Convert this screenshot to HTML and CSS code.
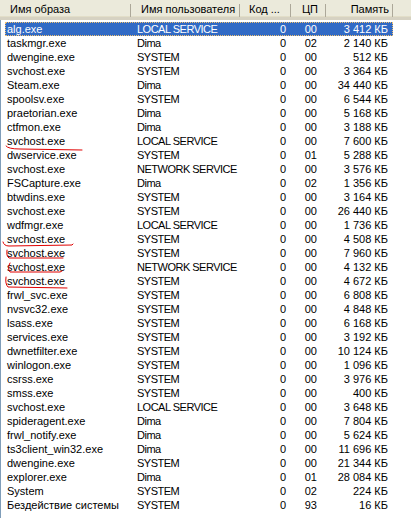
FILE: index.html
```html
<!DOCTYPE html>
<html lang="ru">
<head>
<meta charset="utf-8">
<title>Процессы</title>
<link rel="stylesheet" href="styles.css">
</head>
<body>
<div class="view">
  <div class="header">
    <div class="hcell c-name">Имя образа</div>
    <div class="hcell c-user">Имя пользователя</div>
    <div class="hcell c-pid">Код ...</div>
    <div class="hcell c-cpu">ЦП</div>
    <div class="hcell c-mem">Память</div>
    <div class="hcell c-fill"></div>
  </div>
  <div class="list">
    <div class="row sel"><span>alg.exe</span><span class="u">LOCAL SERVICE</span><span class="r">0</span><span class="r cpu">00</span><span class="r">3 412 КБ</span></div>
    <div class="row"><span>taskmgr.exe</span><span class="u">Dima</span><span class="r">0</span><span class="r cpu">02</span><span class="r">2 140 КБ</span></div>
    <div class="row"><span>dwengine.exe</span><span class="u">SYSTEM</span><span class="r">0</span><span class="r cpu">00</span><span class="r">512 КБ</span></div>
    <div class="row"><span>svchost.exe</span><span class="u">SYSTEM</span><span class="r">0</span><span class="r cpu">00</span><span class="r">3 364 КБ</span></div>
    <div class="row"><span>Steam.exe</span><span class="u">Dima</span><span class="r">0</span><span class="r cpu">00</span><span class="r">34 440 КБ</span></div>
    <div class="row"><span>spoolsv.exe</span><span class="u">SYSTEM</span><span class="r">0</span><span class="r cpu">00</span><span class="r">6 544 КБ</span></div>
    <div class="row"><span>praetorian.exe</span><span class="u">Dima</span><span class="r">0</span><span class="r cpu">00</span><span class="r">5 168 КБ</span></div>
    <div class="row"><span>ctfmon.exe</span><span class="u">Dima</span><span class="r">0</span><span class="r cpu">00</span><span class="r">3 188 КБ</span></div>
    <div class="row"><span>svchost.exe</span><span class="u">LOCAL SERVICE</span><span class="r">0</span><span class="r cpu">00</span><span class="r">7 600 КБ</span></div>
    <div class="row"><span>dwservice.exe</span><span class="u">SYSTEM</span><span class="r">0</span><span class="r cpu">01</span><span class="r">5 288 КБ</span></div>
    <div class="row"><span>svchost.exe</span><span class="u">NETWORK SERVICE</span><span class="r">0</span><span class="r cpu">00</span><span class="r">3 576 КБ</span></div>
    <div class="row"><span>FSCapture.exe</span><span class="u">Dima</span><span class="r">0</span><span class="r cpu">02</span><span class="r">1 356 КБ</span></div>
    <div class="row"><span>btwdins.exe</span><span class="u">SYSTEM</span><span class="r">0</span><span class="r cpu">00</span><span class="r">3 164 КБ</span></div>
    <div class="row"><span>svchost.exe</span><span class="u">SYSTEM</span><span class="r">0</span><span class="r cpu">00</span><span class="r">26 440 КБ</span></div>
    <div class="row"><span>wdfmgr.exe</span><span class="u">LOCAL SERVICE</span><span class="r">0</span><span class="r cpu">00</span><span class="r">1 736 КБ</span></div>
    <div class="row"><span>svchost.exe</span><span class="u">SYSTEM</span><span class="r">0</span><span class="r cpu">00</span><span class="r">4 508 КБ</span></div>
    <div class="row"><span>svchost.exe</span><span class="u">SYSTEM</span><span class="r">0</span><span class="r cpu">00</span><span class="r">7 960 КБ</span></div>
    <div class="row"><span>svchost.exe</span><span class="u">NETWORK SERVICE</span><span class="r">0</span><span class="r cpu">00</span><span class="r">4 132 КБ</span></div>
    <div class="row"><span>svchost.exe</span><span class="u">SYSTEM</span><span class="r">0</span><span class="r cpu">00</span><span class="r">4 672 КБ</span></div>
    <div class="row"><span>frwl_svc.exe</span><span class="u">SYSTEM</span><span class="r">0</span><span class="r cpu">00</span><span class="r">6 808 КБ</span></div>
    <div class="row"><span>nvsvc32.exe</span><span class="u">SYSTEM</span><span class="r">0</span><span class="r cpu">00</span><span class="r">4 848 КБ</span></div>
    <div class="row"><span>lsass.exe</span><span class="u">SYSTEM</span><span class="r">0</span><span class="r cpu">00</span><span class="r">6 168 КБ</span></div>
    <div class="row"><span>services.exe</span><span class="u">SYSTEM</span><span class="r">0</span><span class="r cpu">00</span><span class="r">3 192 КБ</span></div>
    <div class="row"><span>dwnetfilter.exe</span><span class="u">SYSTEM</span><span class="r">0</span><span class="r cpu">00</span><span class="r">10 124 КБ</span></div>
    <div class="row"><span>winlogon.exe</span><span class="u">SYSTEM</span><span class="r">0</span><span class="r cpu">00</span><span class="r">1 096 КБ</span></div>
    <div class="row"><span>csrss.exe</span><span class="u">SYSTEM</span><span class="r">0</span><span class="r cpu">00</span><span class="r">3 976 КБ</span></div>
    <div class="row"><span>smss.exe</span><span class="u">SYSTEM</span><span class="r">0</span><span class="r cpu">00</span><span class="r">400 КБ</span></div>
    <div class="row"><span>svchost.exe</span><span class="u">LOCAL SERVICE</span><span class="r">0</span><span class="r cpu">00</span><span class="r">3 648 КБ</span></div>
    <div class="row"><span>spideragent.exe</span><span class="u">Dima</span><span class="r">0</span><span class="r cpu">00</span><span class="r">7 804 КБ</span></div>
    <div class="row"><span>frwl_notify.exe</span><span class="u">Dima</span><span class="r">0</span><span class="r cpu">00</span><span class="r">5 624 КБ</span></div>
    <div class="row"><span>ts3client_win32.exe</span><span class="u">Dima</span><span class="r">0</span><span class="r cpu">00</span><span class="r">11 696 КБ</span></div>
    <div class="row"><span>dwengine.exe</span><span class="u">SYSTEM</span><span class="r">0</span><span class="r cpu">00</span><span class="r">21 344 КБ</span></div>
    <div class="row"><span>explorer.exe</span><span class="u">Dima</span><span class="r">0</span><span class="r cpu">01</span><span class="r">28 084 КБ</span></div>
    <div class="row"><span>System</span><span class="u">SYSTEM</span><span class="r">0</span><span class="r cpu">02</span><span class="r">224 КБ</span></div>
    <div class="row"><span>Бездействие системы</span><span class="u">SYSTEM</span><span class="r">0</span><span class="r cpu">93</span><span class="r">16 КБ</span></div>
  </div>
  <svg class="marks" width="411" height="518" viewBox="0 0 411 518" fill="none" stroke="#e00000" stroke-width="1" stroke-linecap="round">
    <path d="M6 146 Q8 149 20 149 L82 150"/>
    <path d="M3 242 Q4 246 9 246 L72 245 L73 244"/>
    <path d="M7 250 Q6 256 9 258 L63 258"/>
    <path d="M10 263 Q7 268 10 272 L60 272 L62 271"/>
    <path d="M6 277 Q5 284 8 287 L67 288"/>
  </svg>
</div>
</body>
</html>
```
FILE: styles.css
```css
html, body {
  margin: 0;
  padding: 0;
  background: #ffffff;
}
body {
  font-family: "Liberation Sans", Arial, sans-serif;
  font-size: 11px;
  color: #000;
  width: 411px;
  height: 518px;
  overflow: hidden;
}
.view {
  position: relative;
  width: 411px;
  height: 518px;
}
.header {
  display: grid;
  grid-template-columns: 131px 109px 51px 35px 67px 1fr;
  height: 17px;
  background: #ebeadb;
  border-bottom: 3px solid #d6d2c2;
  box-shadow: inset 0 -1px 0 #e2dec8;
}
.hcell {
  position: relative;
  line-height: 18px;
  white-space: nowrap;
  overflow: hidden;
}
.hcell::after {
  content: "";
  position: absolute;
  right: 0;
  top: 4px;
  height: 13px;
  width: 1px;
  background: #aca899;
  box-shadow: 1px 0 0 #fff;
}
.hcell.c-fill::after { display: none; }
.c-name { padding-left: 10px; }
.c-user { padding-left: 10px; }
.c-pid { padding-left: 9px; }
.c-cpu { text-align: right; padding-right: 8px; }
.c-mem { text-align: right; padding-right: 4px; }
.list {
  display: flex;
  flex-direction: column;
  padding-top: 2px;
  border-left: 1px solid #7f9db9;
  height: 498px;
}
.row {
  display: grid;
  grid-template-columns: 130px 109px 51px 35px 67px;
  height: 14px;
  line-height: 14px;
  white-space: nowrap;
}
.row span { overflow: hidden; }
.row span:first-child { padding-left: 6px; }
.row .u { padding-left: 6px; letter-spacing: -0.5px; }
.row .r { text-align: right; padding-right: 5px; }
.row .cpu { padding-right: 9px; }
.row.sel {
  grid-template-columns: 126px 109px 51px 35px 67px;
  background: #316ac5;
  color: #fff;
  outline: 1px dotted #f0c070;
  outline-offset: -1px;
  margin-left: 4px;
  width: 388px;
}
.row.sel span:first-child { padding-left: 2px; }
.marks {
  position: absolute;
  left: 0;
  top: 0;
  pointer-events: none;
}
```
